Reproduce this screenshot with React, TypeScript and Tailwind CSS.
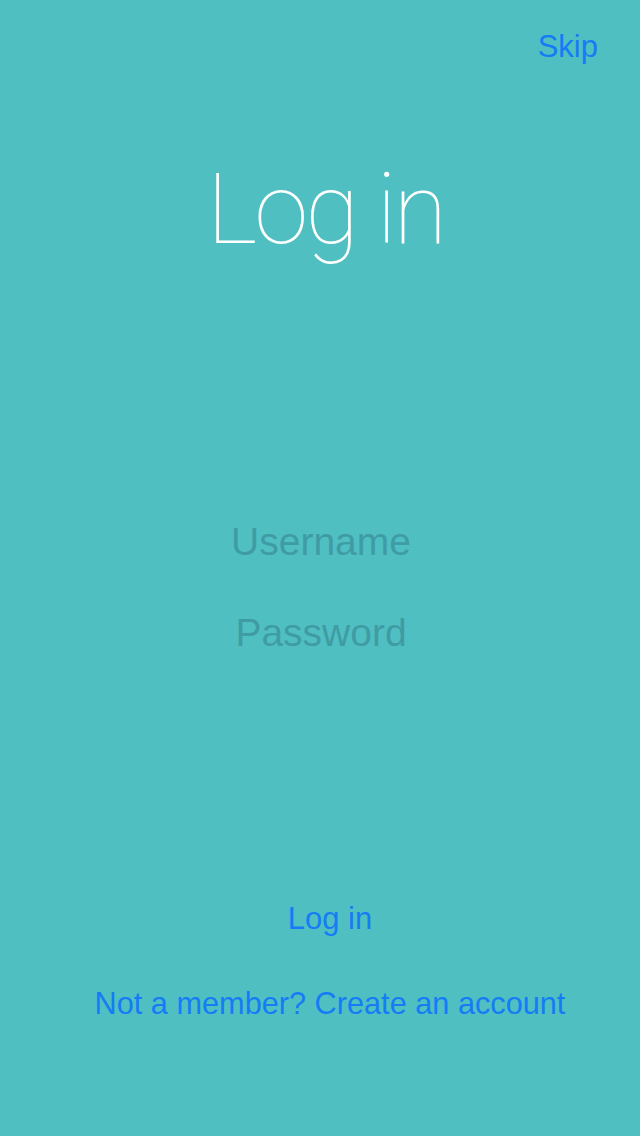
import React from "react";

export default function App() {
  return (
    <div className="w-[640px] h-[1136px] bg-[#50bfc2] flex flex-col overflow-hidden font-['Liberation_Sans',Arial,sans-serif]">
      <div className="flex justify-end pt-[31px] pr-[42px]">
        <span className="text-[31px] leading-none text-[#157cf5]">Skip</span>
      </div>
      <div className="mt-[99px] flex justify-center pl-[11px]">
        <h1 className="font-['Roboto','Noto_Sans',sans-serif] text-[98px] leading-none font-thin text-white tracking-[-3px]">
          Log in
        </h1>
      </div>
      <div className="mt-[263px] flex flex-col items-center pl-[2px]">
        <input
          placeholder="Username"
          className="w-[300px] text-center text-[39px] leading-none h-[39px] bg-transparent outline-none placeholder:text-[#3f9ca4] text-white"
        />
        <input
          type="password"
          placeholder="Password"
          className="mt-[52px] w-[300px] text-center text-[39px] leading-none h-[39px] bg-transparent outline-none placeholder:text-[#3f9ca4] text-white"
        />
      </div>
      <div className="mt-[251px] flex flex-col items-center pl-[20px]">
        <span className="text-[31px] leading-none h-[31px] text-[#157cf5]">Log in</span>
        <span className="mt-[55px] text-[30.7px] leading-none text-[#157cf5]">
          Not a member? Create an account
        </span>
      </div>
    </div>
  );
}
